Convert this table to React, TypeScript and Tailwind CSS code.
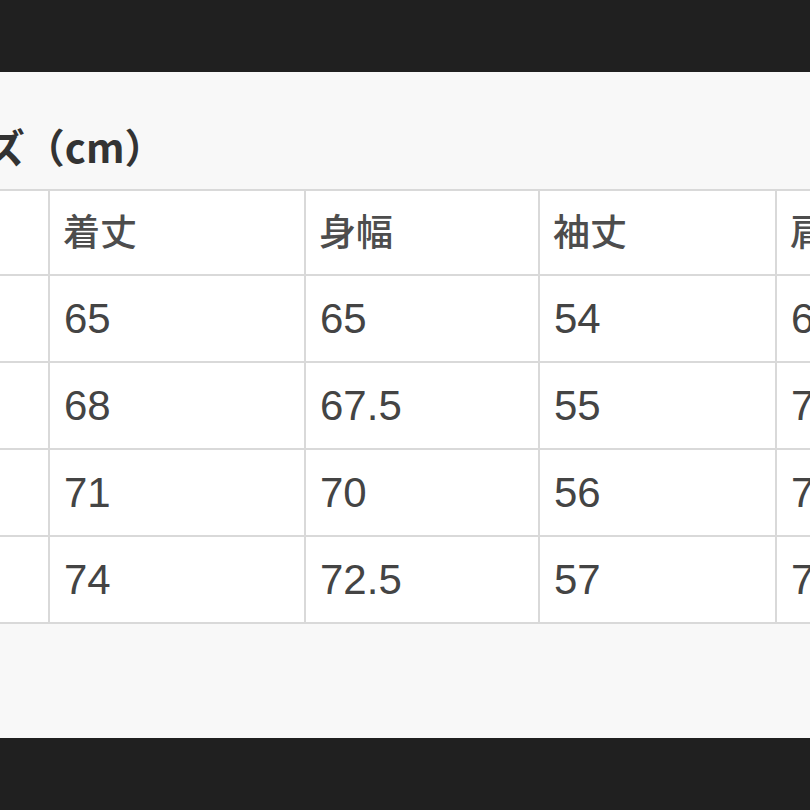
const headers = ['', '着丈', '身幅', '袖丈', '肩幅'];

const rows = [
  ['', '65', '65', '54', '64'],
  ['', '68', '67.5', '55', '71'],
  ['', '71', '70', '56', '73'],
  ['', '74', '72.5', '57', '75'],
];

export default function App() {
  return (
    <div className="flex h-[810px] w-[810px] flex-col overflow-hidden bg-[#202020]">
      <div className="h-[72px] shrink-0 bg-[#202020]" />

      <div className="flex-1 overflow-hidden bg-[#f8f8f8]">
        <div className="-ml-[82px] w-max">
          <h2
            className="-ml-[12px] flex h-[117px] items-center pt-[30px] text-[40px] font-bold leading-none text-[#333]"
            style={{ fontFamily: '"Noto Sans CJK JP", "Liberation Sans", sans-serif' }}
          >
            サイズ（cm）
          </h2>

          <div className="grid grid-cols-[128px_254px_232px_235px_240px] gap-[2px] bg-[#d9d9d9] p-[2px]">
            {headers.map((h, i) => (
              <div
                key={'h' + i}
                className="flex h-[83px] items-center bg-white pb-[4px] pl-[13px] text-[37px] font-medium text-[#4d4d4d]"
                style={{ fontFamily: '"Noto Sans CJK JP", sans-serif' }}
              >
                {h}
              </div>
            ))}
            {rows.map((r, ri) =>
              r.map((v, ci) => (
                <div
                  key={ri + '-' + ci}
                  className="flex h-[85px] items-center bg-white pl-[14px] text-[42px] text-[#444]"
                  style={{ fontFamily: '"Liberation Sans", Arial, sans-serif' }}
                >
                  {v}
                </div>
              ))
            )}
          </div>
        </div>
      </div>

      <div className="h-[72px] shrink-0 bg-[#202020]" />
    </div>
  );
}
